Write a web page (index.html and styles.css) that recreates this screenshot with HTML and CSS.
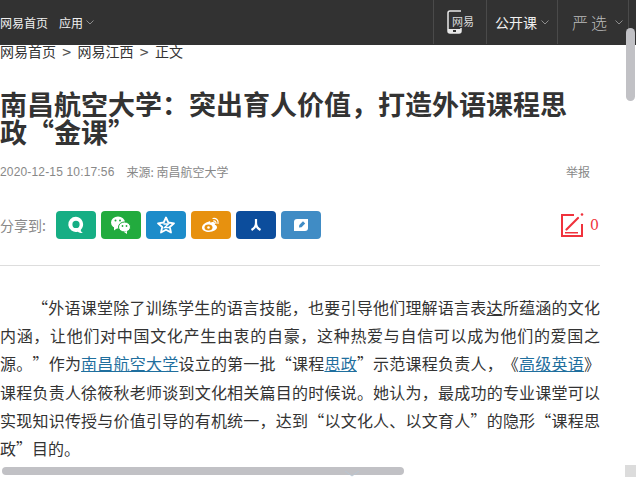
FILE: index.html
```html
<!DOCTYPE html>
<html lang="zh">
<head>
<meta charset="utf-8">
<title>南昌航空大学：突出育人价值，打造外语课程思政“金课”</title>
<link rel="stylesheet" href="styles.css">
</head>
<body>
<header class="topbar">
  <nav class="top-left">
    <a class="top-home">网易首页</a>
    <a class="top-app">应用<svg class="chev" viewBox="0 0 8 5" width="8" height="5"><path d="M.5.5 4 4 7.500.5" fill="none" stroke="#8c8c8c"/></svg></a>
  </nav>
  <nav class="top-right">
    <a class="top-cell cell-phone">
      <svg width="16" height="24" viewBox="0 0 16 24"><path d="M14 1H3a2 2 0 0 0-2 2v18a2 2 0 0 0 2 2h9a2 2 0 0 0 2-2v-3" fill="none" stroke="#e8e8e8" stroke-width="1.500"/><path d="M1 19h13v3a1 1 0 0 1-1 1H2a1 1 0 0 1-1-1Z" fill="#e8e8e8"/><rect x="6" y="20" width="3" height="2" fill="#333"/></svg>
      <span class="phone-text">网易</span>
    </a>
    <a class="top-cell cell-open">公开课<svg class="chev" viewBox="0 0 8 5" width="8" height="5"><path d="M.5.5 4 4 7.500.5" fill="none" stroke="#8c8c8c"/></svg></a>
    <a class="top-cell cell-yx"><span class="yx-text">严选</span><svg class="chev" viewBox="0 0 8 5" width="8" height="5"><path d="M.5.5 4 4 7.500.5" fill="none" stroke="#8c8c8c"/></svg></a>
  </nav>
</header>

<main class="article">
  <div class="crumbs"><a>网易首页</a><span class="sep">&gt;</span><a>网易江西</a><span class="sep">&gt;</span><a>正文</a></div>
  <h1 class="title">南昌航空大学：突出育人价值，打造外语课程思政“金课”</h1>
  <div class="meta">
    <span class="date">2020-12-15 10:17:56</span>
    <span class="source">来源: 南昌航空大学</span>
    <a class="report">举报</a>
  </div>
  <div class="share-row">
    <span class="share-label">分享到:</span>
    <a class="btn b-yixin"><svg width="20" height="20" viewBox="0 0 20 20"><path d="M10 1.800a7.600 7.600 0 1 0 1.600 15c1.500 1 3.300 1.300 5.400 1.200-1.300-.8-2.100-1.900-2.300-3.100A7.600 7.600 0 0 0 10 1.800Zm0 4a3.600 3.600 0 1 1 0 7.200 3.600 3.600 0 0 1 0-7.200Z" fill="#fff"/></svg></a>
    <a class="btn b-wx"><svg width="22" height="20" viewBox="0 0 22 20"><ellipse cx="8" cy="7.500" rx="7" ry="6" fill="#fff"/><path d="M4 11.500v4l3.500-2.500Z" fill="#fff"/><ellipse cx="14.500" cy="12" rx="6" ry="5" fill="#fff" stroke="#22ab3e"/><path d="M17 16v3l-3-2Z" fill="#fff"/><circle cx="5.500" cy="5.500" r="1" fill="#22ab3e"/><circle cx="10" cy="5.500" r="1" fill="#22ab3e"/><circle cx="12.500" cy="11" r=".9" fill="#22ab3e"/><circle cx="16.500" cy="11" r=".9" fill="#22ab3e"/></svg></a>
    <a class="btn b-qz"><svg width="20" height="20" viewBox="0 0 20 20"><path d="M10 2.500 12.300 7.500 18 8.300 13.800 12 15 17.500 10 14.800 5 17.500 6.200 12 2 8.300 7.700 7.500Z" fill="none" stroke="#fff" stroke-width="1.800" stroke-linejoin="round"/><path d="M7.500 9h5l-4 3.500h5" fill="none" stroke="#fff" stroke-width="1.300"/></svg></a>
    <a class="btn b-wb"><svg width="22" height="20" viewBox="0 0 22 20"><path d="M9 6.500c-4 .8-7 3.700-7 6.300 0 2.500 3.300 4.200 7 4.200 4.300 0 8-2.200 8-4.700 0-1.600-1.400-2.200-2.200-2.500.5-1.500.2-2.700-1.800-2.700-1 0-2 .4-2.500.7-.2-1.200-.5-1.700-1.500-1.300Z" fill="#fff"/><ellipse cx="8.500" cy="12.500" rx="4" ry="3" fill="#e7910f"/><circle cx="8.500" cy="12.500" r="1.300" fill="#fff"/><path d="M13 3.500c3-.7 5.800 1.800 5 5M13.500 6c1.500-.3 2.800 1 2.500 2.500" fill="none" stroke="#fff" stroke-width="1.200" stroke-linecap="round"/></svg></a>
    <a class="btn b-rr"><svg width="20" height="20" viewBox="0 0 20 20"><path d="M10 4v4c0 3-1.800 5.500-4.500 7M10 8c0 3 1.800 5.500 4.500 7" fill="none" stroke="#fff" stroke-width="2.200"/></svg></a>
    <a class="btn b-lofter"><svg width="20" height="20" viewBox="0 0 20 20"><path d="M3 7a3 3 0 0 1 3-3h11v9a3 3 0 0 1-3 3H3Z" fill="#fff"/><path d="M8 12.500 8.300 10 12 6.300 14.200 8.400 10.500 12.200Z" fill="#408cc5"/></svg></a>
    <a class="comment">
      <svg width="25" height="26" viewBox="0 0 25 26"><path d="M14 3H2v21h20V12" fill="none" stroke="#f0323c" stroke-width="2"/><path d="M6.500 17.500 18 6" stroke="#f0323c" stroke-width="2.200" stroke-linecap="round"/><circle cx="22" cy="2.500" r="1.300" fill="#f0323c"/><rect x="5" y="20" width="13" height="1.500" fill="#f0323c"/></svg>
      <span class="count">0</span>
    </a>
  </div>
  <div class="content">
    <p>“外语课堂除了训练学生的语言技能，也要引导他们理解语言表<a class="plain-link">达</a>所蕴涵的文化内涵，让他们对中国文化产生由衷的自豪，这种热爱与自信可以成为他们的爱国之源。”作为<a>南昌航空大学</a>设立的第一批“课程<a>思政</a>”示范课程负责人，《<a>高级英语</a>》课程负责人徐筱秋老师谈到文化相关篇目的时候说。她认为，最成功的专业课堂可以实现知识传授与价值引导的有机统一，达到“以文化人、以文育人”的隐形“课程思政”目的。</p>
  </div>
</main>

<div class="sb-v"></div>
<div class="sb-h"></div>
<div class="sb-corner"></div>
<svg class="more-chev" width="16" height="6" viewBox="0 0 16 6"><path d="M1 0 8 5 15 0" fill="none" stroke="#b9c6d2" stroke-width="1"/></svg>
</body>
</html>
```
FILE: styles.css
```css
* { box-sizing: border-box; }
html, body { margin: 0; height: 100%; overflow: hidden; background: #fff; }
body { font-family: "Noto Sans CJK SC", "Liberation Sans", sans-serif; color: #333; position: relative; text-spacing-trim: space-all; }
a { color: inherit; text-decoration: none; }

.topbar { height: 45px; background: #323232; display: flex; justify-content: space-between; align-items: stretch; color: #f0f0f0; font-size: 12px; }
.top-left { display: flex; align-items: center; padding-bottom: 1px; }
.top-home { margin-right: 11px; }
.top-app { display: flex; align-items: center; gap: 3px; }
.chev { display: block; }
.top-right { display: flex; padding-right: 7px; }
.top-cell { display: flex; align-items: center; border-left: 1px solid #4a4a4a; height: 44px; }
.cell-phone { width: 53px; padding-left: 13px; position: relative; }
.phone-text { position: absolute; left: 18px; top: 15px; font-size: 11px; line-height: 13px; color: #ddd; white-space: nowrap; background: #323232; }
.cell-open { width: 71px; padding-left: 8px; gap: 4px; font-size: 14px; }
.cell-yx { width: 72px; padding-left: 14px; gap: 5px; border-right: 1px solid #4a4a4a; }
.yx-text { font-family: "Noto Sans CJK SC", serif; font-size: 16px; letter-spacing: 3px; font-weight: 300; color: #bbb; white-space: nowrap; }

.article { width: 600px; }
.crumbs { display: flex; font-size: 14px; line-height: 16px; height: 16px; margin-top: -2px; color: #333; position: relative; }
.sep { width: 21.5px; text-align: center; color: #555; font-size: 16px; }
.title { margin: 31px 0 0; font-size: 27px; line-height: 28px; font-weight: 700; color: #333; width: 580px; }
.meta { display: flex; align-items: center; margin-top: 18px; font-size: 12px; line-height: 16px; color: #888; }
.date { margin-right: 12px; font-family: "Liberation Sans", sans-serif; letter-spacing: .16px; }
.report { margin-left: auto; margin-right: 10px; }
.share-row { display: flex; align-items: center; margin-top: 24px; height: 42px; position: relative; }
.share-label { font-size: 14px; color: #888; width: 56px; }
.btn { width: 40px; height: 28px; border-radius: 4px; margin-right: 5px; display: flex; align-items: center; justify-content: center; }
.b-yixin { background: #16ae84; }
.b-wx { background: #22ab3e; }
.b-qz { background: #1c8cca; }
.b-wb { background: #e7910f; }
.b-rr { background: #0c4d9c; }
.b-lofter { background: #408cc5; }
.comment { margin-left: auto; margin-right: 1px; display: flex; align-items: center; gap: 5px; color: #f0323c; }
.count { font-size: 14px; font-family: "DejaVu Serif", serif; }
.content { margin-top: 19px; border-top: 1px solid #ddd; padding-top: 27px; font-size: 16px; line-height: 28.2px; color: #333; }
.content p { margin: 0; text-indent: 2em; text-align: justify; }
.content a { color: #1f6f9e; text-decoration: underline; }
.content a.plain-link { color: #333; }

.sb-v { position: absolute; left: 626px; top: 28px; width: 9px; height: 73px; background: #c1c1c5; border-radius: 5px; }
.sb-h { position: absolute; left: 2px; top: 467px; width: 402px; height: 8px; background: #c1c1c5; border-radius: 4px; }
.sb-corner { position: absolute; left: 625px; top: 465px; width: 11px; height: 12px; background: #dcdcdc; }
.more-chev { position: absolute; left: 344px; top: 471px; }
```
